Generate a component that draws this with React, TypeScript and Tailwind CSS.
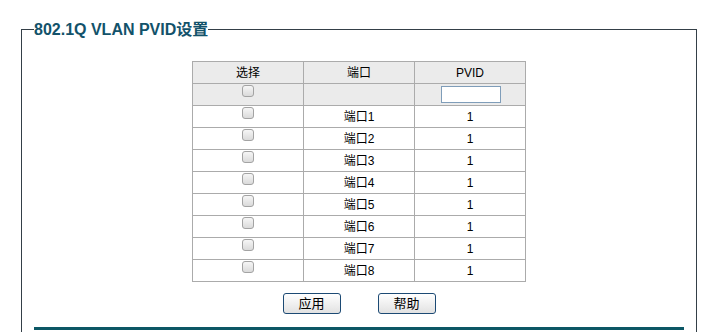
import React from 'react';

const font = { fontFamily: '"Liberation Sans", "Noto Sans CJK SC", Arial, sans-serif' };

const Check: React.FC = () => (
  <span className="inline-block w-[12px] h-[12px] rounded-[3px] border border-[#a3a3a3] bg-gradient-to-b from-[#f6f6f6] to-[#dadada] align-top mt-[1px]" />
);

const App: React.FC = () => {
  const ports = [1, 2, 3, 4, 5, 6, 7, 8];

  return (
    <div className="w-[708px] h-[332px] overflow-hidden bg-white text-[12px] text-black" style={font}>
      <fieldset className="ml-[21px] mt-[20px] w-[676px] h-[400px] border border-[#343f47]">
        <legend className="ml-[12px] text-[16px] leading-[19px] font-bold text-[#12526a]">802.1Q VLAN PVID设置</legend>

        <table className="mx-auto mt-[22px] w-[333px] table-fixed border-collapse">
          <colgroup>
            <col className="w-[111px]" />
            <col className="w-[111px]" />
            <col className="w-[111px]" />
          </colgroup>
          <tbody>
            <tr className="h-[22px] bg-[#ebebeb]">
              <td className="border border-[#ababab] text-center p-0">选择</td>
              <td className="border border-[#ababab] text-center p-0">端口</td>
              <td className="border border-[#ababab] text-center p-0">PVID</td>
            </tr>
            <tr className="h-[22px] bg-[#ebebeb]">
              <td className="border border-[#ababab] text-center align-top p-0"><Check /></td>
              <td className="border border-[#ababab] p-0"></td>
              <td className="border border-[#ababab] text-center p-0">
                <div className="ml-[26px] w-[60px] h-[17px] border border-[#7f9db9] bg-white" />
              </td>
            </tr>
            {ports.map((p) => (
              <tr key={p} className="h-[22px] bg-white">
                <td className="border border-[#ababab] text-center align-top p-0"><Check /></td>
                <td className="border border-[#ababab] text-center p-0">端口{p}</td>
                <td className="border border-[#ababab] text-center p-0">1</td>
              </tr>
            ))}
          </tbody>
        </table>

        <div className="flex justify-center gap-[37px] mt-[11px]">
          <button className="w-[58px] h-[21px] rounded-[3px] border border-[#1c4a74] bg-gradient-to-b from-white to-[#e2e2e2] text-[13px] leading-none">应用</button>
          <button className="w-[58px] h-[21px] rounded-[3px] border border-[#1c4a74] bg-gradient-to-b from-white to-[#e2e2e2] text-[13px] leading-none">帮助</button>
        </div>

        <div className="mx-[12px] mt-[13px] h-[3px] bg-[#0c5765]" />
      </fieldset>
    </div>
  );
};

export default App;
